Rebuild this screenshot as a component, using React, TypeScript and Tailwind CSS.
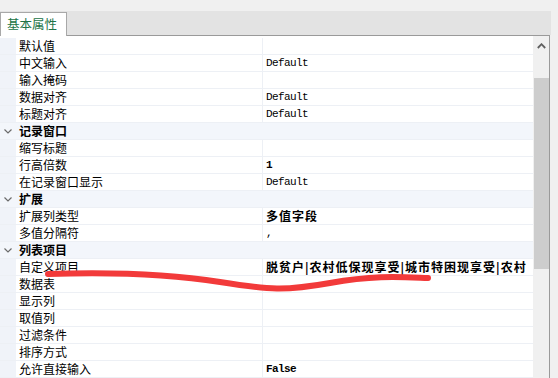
type Row = { name: string; value?: string; bold?: boolean; mono?: boolean; cat?: boolean };

const rows: Row[] = [
  { name: '默认值' },
  { name: '中文输入', value: 'Default', mono: true },
  { name: '输入掩码' },
  { name: '数据对齐', value: 'Default', mono: true },
  { name: '标题对齐', value: 'Default', mono: true },
  { name: '记录窗口', cat: true },
  { name: '缩写标题' },
  { name: '行高倍数', value: '1', bold: true, mono: true },
  { name: '在记录窗口显示', value: 'Default', mono: true },
  { name: '扩展', cat: true },
  { name: '扩展列类型', value: '多值字段', bold: true },
  { name: '多值分隔符', value: ',', mono: true },
  { name: '列表项目', cat: true },
  { name: '自定义项目', value: '脱贫户|农村低保现享受|城市特困现享受|农村', bold: true },
  { name: '数据表' },
  { name: '显示列' },
  { name: '取值列' },
  { name: '过滤条件' },
  { name: '排序方式' },
  { name: '允许直接输入', value: 'False', bold: true, mono: true },
];

const cjk = "font-['Noto_Sans_CJK_SC','Noto_Sans',sans-serif]";

function Chevron() {
  return (
    <svg width="8" height="5" viewBox="0 0 8 5" className="mt-px">
      <polyline points="0.5,0.5 4,4 7.5,0.5" fill="none" stroke="#6b6b6b" strokeWidth="1.2" />
    </svg>
  );
}

function PropRow({ row }: { row: Row }) {
  if (row.cat) {
    return (
      <div className="flex h-[17px] border-b border-[#edf0f5] bg-[#f3f6fb]">
        <div className="flex w-4 shrink-0 items-center justify-center">
          <Chevron />
        </div>
        <div className={`pl-[3px] text-[12px] leading-[16px] font-bold text-black ${cjk}`}>{row.name}</div>
      </div>
    );
  }
  return (
    <div className="flex h-[17px] border-b border-[#edf0f5]">
      <div className="w-4 shrink-0 bg-[#f0f3f9]" />
      <div className={`w-[247px] shrink-0 border-r border-[#edf0f5] bg-white pl-[3px] text-[12px] leading-[16px] text-black ${cjk}`}>
        {row.name}
      </div>
      <div
        className={`min-w-0 flex-1 overflow-hidden whitespace-nowrap bg-white pl-[3px] leading-[16px] text-black ${
          row.mono ? "font-['Liberation_Mono',monospace] text-[11px] tracking-[-0.6px]" : `${cjk} text-[12px] tracking-[1px]`
        } ${row.bold ? 'font-bold' : ''}`}
      >
        {row.value}
      </div>
    </div>
  );
}

export default function App() {
  return (
    <div className="relative h-[378px] w-[558px] overflow-hidden bg-[#f0f0f0] pt-[11px]">
      {/* tab strip */}
      <div className="flex h-[24px] w-[551px] items-end bg-[#e3e3e3]">
        <div className={`-mb-px flex h-[24px] w-[67px] items-center border border-b-0 border-[#a8a8a8] bg-white pl-[6px] text-[12.5px] text-[#217346] ${cjk}`}>
          基本属性
        </div>
      </div>

      {/* property grid */}
      <div className="flex h-[343px] w-[550px] border-t border-r border-[#9a9a9a]">
        <div className="w-[533px] bg-white pt-[2px]">
          {rows.map((r, i) => (
            <PropRow key={i} row={r} />
          ))}
        </div>
        <div className="flex w-[16px] flex-col items-center bg-[#f0f0f0]">
          <svg width="9" height="6" viewBox="0 0 9 6" className="mt-[7px]">
            <polyline points="0.8,5 4.5,1.2 8.2,5" fill="none" stroke="#606060" strokeWidth="1.8" />
          </svg>
          <div className="mt-[29px] h-[191px] w-[15px] bg-[#cdcdcd]" />
        </div>
      </div>

      {/* red annotation stroke */}
      <svg className="pointer-events-none absolute left-0 top-0" width="558" height="378">
        <path
          d="M48 274 C 110 272, 170 274, 220 282 S 285 291, 330 283 S 400 277, 428 278"
          fill="none"
          stroke="#f23a3a"
          strokeWidth="6"
          strokeLinecap="round"
        />
      </svg>
    </div>
  );
}
